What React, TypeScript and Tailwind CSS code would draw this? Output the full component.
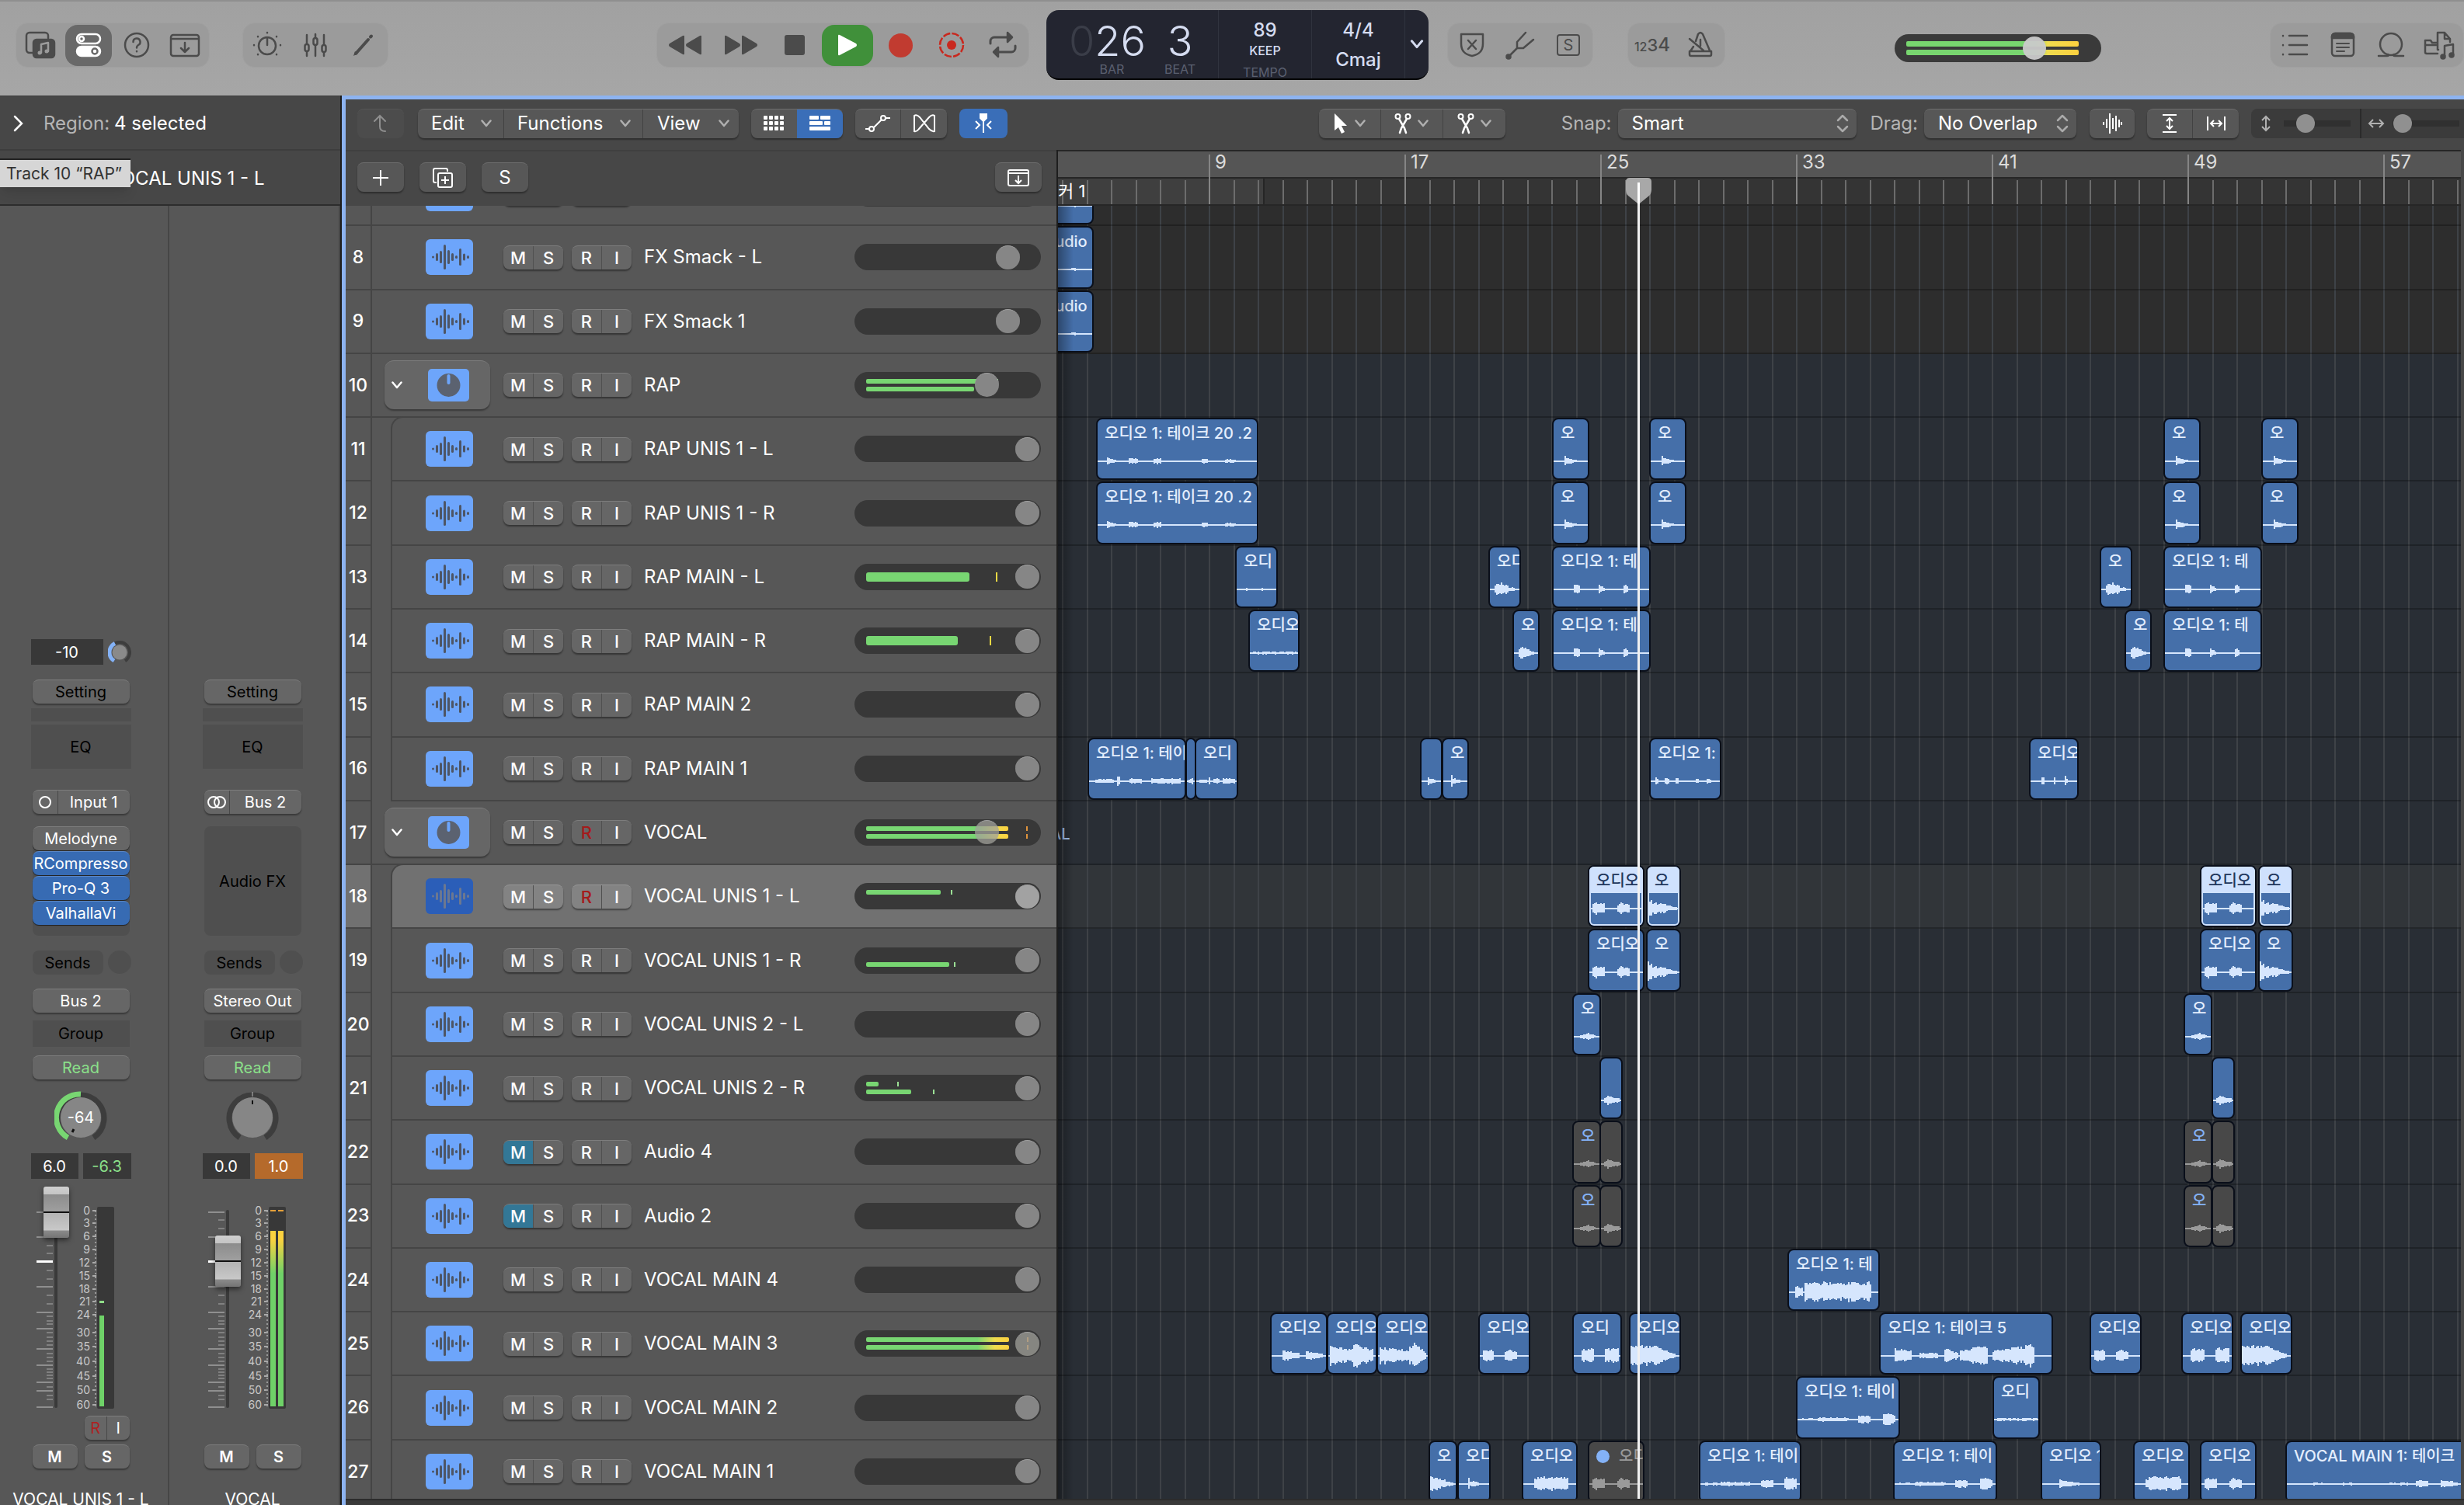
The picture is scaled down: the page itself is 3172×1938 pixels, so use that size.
import type { ReactNode } from 'react';
import clsx from 'clsx';

type Burst = [from: number, to: number, amp: number, endAmp?: number];

interface Region {
  x: number;
  w: number;
  label?: string;
  wave: keyof typeof WAVES;
  state?: 'muted' | 'selected' | 'take';
}

interface Meter {
  top?: number;
  bottom?: number;
  mono?: number;
  peakTop?: number;
  peakBottom?: number;
  hot?: boolean;
}

interface Track {
  n: number;
  name: string;
  kind?: 'group' | 'child' | 'first';
  muted?: boolean;
  armed?: boolean;
  selected?: boolean;
  volume?: number;
  meter?: Meter;
  regions?: Region[];
}

const WAVES = {
  flat: [[0.2, 0.25, 2], [0.6, 0.7, 2]],
  blips: [[0.05, 0.11, 6, 2], [0.19, 0.25, 4], [0.35, 0.4, 4], [0.65, 0.69, 3], [0.8, 0.86, 3]],
  hit: [[0.28, 0.35, 9, 7], [0.35, 0.65, 5, 2]],
  words: [[0.21, 0.27, 7], [0.47, 0.53, 7, 3], [0.72, 0.78, 9, 3]],
  low: [[0.05, 0.55, 2], [0.6, 0.95, 2]],
  speech: [[0.05, 0.25, 3], [0.28, 0.32, 6], [0.42, 0.55, 4], [0.64, 0.95, 4]],
  blob: [[0.15, 0.35, 6, 9], [0.35, 0.6, 9, 6], [0.6, 0.8, 3]],
  two: [[0.05, 0.27, 8], [0.5, 0.6, 5, 9], [0.6, 0.75, 9, 5]],
  twoLate: [[0.14, 0.42, 10], [0.64, 0.95, 11]],
  decay: [[0, 0.12, 14, 12], [0.12, 0.55, 9, 6], [0.55, 0.88, 5, 2]],
  small: [[0.2, 0.5, 2, 5], [0.5, 0.8, 6, 2]],
  knot: [[0.15, 0.35, 4, 7], [0.35, 0.85, 6, 3]],
  dense: [[0.06, 0.14, 8], [0.17, 0.92, 14]],
  soft: [[0.18, 0.24, 7], [0.26, 0.85, 10]],
  loud: [[0.03, 0.5, 13, 10], [0.5, 0.65, 14, 18], [0.65, 0.95, 14, 9]],
  late: [[0.03, 0.6, 12, 8], [0.6, 0.72, 12, 19], [0.72, 0.95, 19, 5]],
  full: [[0, 0.3, 13, 15], [0.3, 0.6, 15, 12], [0.6, 0.92, 11, 2]],
  phrase: [[0.08, 0.18, 10, 7], [0.22, 0.33, 4], [0.37, 0.45, 11, 4], [0.46, 0.62, 7, 15], [0.65, 0.9, 7, 16]],
  verse: [[0.04, 0.16, 2], [0.2, 0.5, 3], [0.6, 0.72, 6], [0.84, 0.96, 10, 7]],
  quiet: [[0.2, 0.5, 8, 4], [0.62, 0.94, 7, 3]],
  long: [[0.13, 0.2, 2], [0.3, 0.36, 2], [0.55, 0.65, 2], [0.7, 0.76, 5], [0.83, 0.92, 6, 3]],
} satisfies Record<string, Burst[]>;

const TRACKS: Track[] = [
  { n: 7, name: 'FX Smack - R', volume: 87, regions: [{ x: 1334, w: 74, label: 'Audio', wave: 'flat' }] },
  { n: 8, name: 'FX Smack - L', volume: 87, regions: [{ x: 1334, w: 74, label: 'Audio', wave: 'flat' }] },
  { n: 9, name: 'FX Smack 1', volume: 87, regions: [{ x: 1334, w: 74, label: 'Audio', wave: 'flat' }] },
  {
    n: 10, name: 'RAP', kind: 'group', volume: 74,
    meter: { top: 160, bottom: 154, peakTop: 183, peakBottom: 179 },
  },
  {
    n: 11, name: 'RAP UNIS 1 - L', kind: 'first',
    regions: [
      { x: 1412, w: 208, label: '오디오 1: 테이크 20 .2', wave: 'blips' },
      { x: 1999, w: 47, label: '오', wave: 'hit' },
      { x: 2124, w: 47, label: '오', wave: 'hit' },
      { x: 2786, w: 47, label: '오', wave: 'hit' },
      { x: 2912, w: 47, label: '오', wave: 'hit' },
    ],
  },
  {
    n: 12, name: 'RAP UNIS 1 - R', kind: 'child',
    regions: [
      { x: 1412, w: 208, label: '오디오 1: 테이크 20 .2', wave: 'blips' },
      { x: 1999, w: 47, label: '오', wave: 'hit' },
      { x: 2124, w: 47, label: '오', wave: 'hit' },
      { x: 2786, w: 47, label: '오', wave: 'hit' },
      { x: 2912, w: 47, label: '오', wave: 'hit' },
    ],
  },
  {
    n: 13, name: 'RAP MAIN - L', kind: 'child', meter: { mono: 148, peakTop: 182 },
    regions: [
      { x: 1591, w: 54, label: '오디', wave: 'flat' },
      { x: 1917, w: 41, label: '오디', wave: 'blob' },
      { x: 1999, w: 126, label: '오디오 1: 테', wave: 'words' },
      { x: 2704, w: 41, label: '오', wave: 'blob' },
      { x: 2786, w: 126, label: '오디오 1: 테', wave: 'words' },
    ],
  },
  {
    n: 14, name: 'RAP MAIN - R', kind: 'child', meter: { mono: 133, peakTop: 174 },
    regions: [
      { x: 1608, w: 65, label: '오디오', wave: 'low' },
      { x: 1948, w: 34, label: '오', wave: 'blob' },
      { x: 1999, w: 126, label: '오디오 1: 테', wave: 'words' },
      { x: 2736, w: 34, label: '오', wave: 'blob' },
      { x: 2786, w: 126, label: '오디오 1: 테', wave: 'words' },
    ],
  },
  { n: 15, name: 'RAP MAIN 2', kind: 'child' },
  {
    n: 16, name: 'RAP MAIN 1', kind: 'child',
    regions: [
      { x: 1401, w: 126, label: '오디오 1: 테이', wave: 'speech' },
      { x: 1527, w: 13, wave: 'small' },
      { x: 1539, w: 55, label: '오디', wave: 'speech' },
      { x: 1829, w: 28, wave: 'hit' },
      { x: 1857, w: 34, label: '오', wave: 'hit' },
      { x: 2124, w: 92, label: '오디오 1:', wave: 'blips' },
      { x: 2613, w: 63, label: '오디오', wave: 'words' },
    ],
  },
  {
    n: 17, name: 'VOCAL', kind: 'group', armed: true, volume: 74,
    meter: { top: 198, bottom: 198, peakTop: 221, peakBottom: 221, hot: true },
  },
  {
    n: 18, name: 'VOCAL UNIS 1 - L', kind: 'first', armed: true, selected: true, meter: { top: 111, peakTop: 124 },
    regions: [
      { x: 2045, w: 72, label: '오디오', wave: 'two', state: 'selected' },
      { x: 2120, w: 44, label: '오', wave: 'decay', state: 'selected' },
      { x: 2833, w: 72, label: '오디오', wave: 'two', state: 'selected' },
      { x: 2908, w: 44, label: '오', wave: 'decay', state: 'selected' },
    ],
  },
  {
    n: 19, name: 'VOCAL UNIS 1 - R', kind: 'child', meter: { bottom: 122, peakBottom: 128 },
    regions: [
      { x: 2045, w: 72, label: '오디오', wave: 'two' },
      { x: 2120, w: 44, label: '오', wave: 'decay' },
      { x: 2833, w: 72, label: '오디오', wave: 'two' },
      { x: 2908, w: 44, label: '오', wave: 'decay' },
    ],
  },
  {
    n: 20, name: 'VOCAL UNIS 2 - L', kind: 'child',
    regions: [
      { x: 2025, w: 36, label: '오', wave: 'small' },
      { x: 2812, w: 36, label: '오', wave: 'small' },
    ],
  },
  {
    n: 21, name: 'VOCAL UNIS 2 - R', kind: 'child',
    meter: { top: 31, bottom: 73, peakTop: 55, peakBottom: 101 },
    regions: [
      { x: 2060, w: 29, wave: 'knot' },
      { x: 2848, w: 29, wave: 'knot' },
    ],
  },
  {
    n: 22, name: 'Audio 4', kind: 'child', muted: true,
    regions: [
      { x: 2025, w: 36, label: '오', wave: 'small', state: 'muted' },
      { x: 2060, w: 29, wave: 'knot', state: 'muted' },
      { x: 2812, w: 36, label: '오', wave: 'small', state: 'muted' },
      { x: 2848, w: 29, wave: 'knot', state: 'muted' },
    ],
  },
  {
    n: 23, name: 'Audio 2', kind: 'child', muted: true,
    regions: [
      { x: 2025, w: 36, label: '오', wave: 'small', state: 'muted' },
      { x: 2060, w: 29, wave: 'knot', state: 'muted' },
      { x: 2812, w: 36, label: '오', wave: 'small', state: 'muted' },
      { x: 2848, w: 29, wave: 'knot', state: 'muted' },
    ],
  },
  { n: 24, name: 'VOCAL MAIN 4', kind: 'child', regions: [{ x: 2302, w: 118, label: '오디오 1: 테', wave: 'dense' }] },
  {
    n: 25, name: 'VOCAL MAIN 3', kind: 'child',
    meter: { top: 199, bottom: 199, peakTop: 222, peakBottom: 222, hot: true },
    regions: [
      { x: 1636, w: 73, label: '오디오', wave: 'quiet' },
      { x: 1709, w: 64, label: '오디오', wave: 'loud' },
      { x: 1773, w: 67, label: '오디오', wave: 'late' },
      { x: 1904, w: 66, label: '오디오', wave: 'two' },
      { x: 2025, w: 63, label: '오디', wave: 'twoLate' },
      { x: 2098, w: 66, label: '오디오', wave: 'full' },
      { x: 2420, w: 223, label: '오디오 1: 테이크 5', wave: 'phrase' },
      { x: 2691, w: 66, label: '오디오', wave: 'two' },
      { x: 2809, w: 66, label: '오디오', wave: 'twoLate' },
      { x: 2885, w: 66, label: '오디오', wave: 'full' },
    ],
  },
  {
    n: 26, name: 'VOCAL MAIN 2', kind: 'child',
    regions: [
      { x: 2313, w: 133, label: '오디오 1: 테이', wave: 'verse' },
      { x: 2566, w: 60, label: '오디', wave: 'low' },
    ],
  },
  {
    n: 27, name: 'VOCAL MAIN 1', kind: 'child',
    regions: [
      { x: 1840, w: 36, label: '오', wave: 'decay' },
      { x: 1877, w: 42, label: '오디', wave: 'hit' },
      { x: 1960, w: 71, label: '오디오', wave: 'soft' },
      { x: 2045, w: 72, label: '오디', wave: 'two', state: 'take' },
      { x: 2188, w: 131, label: '오디오 1: 테이', wave: 'verse' },
      { x: 2438, w: 133, label: '오디오 1: 테이', wave: 'verse' },
      { x: 2628, w: 77, label: '오디오 1', wave: 'hit' },
      { x: 2747, w: 72, label: '오디오', wave: 'soft' },
      { x: 2833, w: 72, label: '오디오', wave: 'two' },
      { x: 2943, w: 240, label: 'VOCAL MAIN 1: 테이크', wave: 'long' },
    ],
  },
];

// left edge of the arrange area in project coordinates
const ORIGIN = 1363;

// one 8-bar block is 252px, so two bars repeat every 63px
const BAR_GRID =
  'bg-[linear-gradient(90deg,#3e4247_2px,transparent_2px,transparent_32px,#3e4247_32px,#3e4247_34px,transparent_34px)] bg-size-[63px_100%] bg-position-[5px_0]';
const RULER_GRID =
  'bg-[linear-gradient(90deg,#6c6c6c_2px,transparent_2px,transparent_32px,#6c6c6c_32px,#6c6c6c_34px,transparent_34px)] bg-size-[63px_100%] bg-position-[5px_0]';

const BTN = 'border-t border-[#7d7d7d] bg-[#666666] shadow-[0_2px_2px_rgba(0,0,0,0.35)]';
const TOOL = 'border-t border-[#6c6c6c] bg-[#575757] shadow-[0_2px_2px_rgba(0,0,0,0.35)]';

function Icon({ children, className }: { children: ReactNode; className?: string }) {
  return (
    <svg
      width="40"
      height="40"
      viewBox="0 0 40 40"
      fill="none"
      stroke="currentColor"
      strokeWidth="2.5"
      strokeLinecap="round"
      strokeLinejoin="round"
      className={clsx('shrink-0', className)}
    >
      {children}
    </svg>
  );
}

function Chevron({ className }: { className?: string }) {
  return (
    <svg width="14" height="10" viewBox="0 0 14 10" fill="none" stroke="currentColor" strokeWidth="2.5" strokeLinecap="round" strokeLinejoin="round" className={className}>
      <path d="M1.500 1.500L7 8L12.500 1.500" />
    </svg>
  );
}

function BarButton({ label, active, className, children }: { label: string; active?: boolean; className?: string; children: ReactNode }) {
  return (
    <button aria-label={label} className={clsx('flex h-14 items-center justify-center text-[#4b4b4b]', className ?? 'w-[62px]')}>
      {active ? (
        <span className="flex h-[53px] w-[60px] items-center justify-center rounded-2xl bg-[#696969] text-white">{children}</span>
      ) : (
        children
      )}
    </button>
  );
}

function BarGroup({ className, children }: { className?: string; children: ReactNode }) {
  return <div className={clsx('flex shrink-0 items-center rounded-2xl border border-[#a0a0a0] bg-[#9b9b9b]', className)}>{children}</div>;
}

function ControlBar() {
  return (
    <header className="flex h-[123px] shrink-0 items-start border-t-2 border-[#8f8f8f] bg-linear-to-b from-[#a1a1a1] to-[#a6a6a6] pl-5">
      <BarGroup className="mt-[27px]">
        <BarButton label="Library">
          <Icon>
            <path d="M11 30H6a4 4 0 0 1-4-4V8a4 4 0 0 1 4-4h20a4 4 0 0 1 4 4v3" />
            <rect x="11" y="13" width="27" height="23" rx="4" fill="currentColor" />
            <path d="M21 30V19l9-2v11" stroke="#9b9b9b" />
            <circle cx="19" cy="30" r="2.500" fill="#9b9b9b" stroke="none" />
            <circle cx="28" cy="28" r="2.500" fill="#9b9b9b" stroke="none" />
          </Icon>
        </BarButton>
        <BarButton label="Inspector" active>
          <Icon>
            <rect x="5" y="6" width="30" height="12" rx="6" />
            <circle cx="11" cy="12" r="3" />
            <rect x="5" y="22" width="30" height="12" rx="6" fill="currentColor" />
            <circle cx="28" cy="28" r="3.500" stroke="#696969" />
          </Icon>
        </BarButton>
        <BarButton label="Quick Help">
          <Icon>
            <circle cx="20" cy="20" r="15" />
            <path d="M15.500 16a4.500 4.500 0 1 1 6.500 4c-1.500 1-2 1.500-2 3.500M20 28v.2" />
          </Icon>
        </BarButton>
        <BarButton label="Toolbar">
          <Icon>
            <rect x="2" y="7" width="36" height="27" rx="3" />
            <path d="M3 12h34M20 17v11M15 24l5 5l5-5" />
          </Icon>
        </BarButton>
      </BarGroup>
      <BarGroup className="mt-[27px] ml-[42px]">
        <BarButton label="Smart Controls">
          <Icon>
            <circle cx="20" cy="21" r="11" />
            <path d="M20 11v9M20 4v.2M8 9v.2M32 9v.2M3 20v.2M37 20v.2M8 32v.2M32 32v.2" />
          </Icon>
        </BarButton>
        <BarButton label="Mixer">
          <Icon>
            <path d="M9 7v11M9 28v6M20 6v5M20 20v14M31 7v12M31 29v5" />
            <rect x="6.500" y="19" width="5" height="9" rx="2.500" />
            <rect x="17.500" y="11" width="5" height="9" rx="2.500" />
            <rect x="28.500" y="20" width="5" height="9" rx="2.500" />
          </Icon>
        </BarButton>
        <BarButton label="Editors">
          <Icon>
            <path d="M10 31L26 13M29 9.500l1-1" strokeWidth="4" />
            <path d="M7 34l2-6l4 3z" fill="currentColor" stroke="none" />
          </Icon>
        </BarButton>
      </BarGroup>

      <div className="flex flex-1 items-start justify-end pr-[217px]">
        <BarGroup className="mt-[27px]">
          <BarButton label="Rewind" className="w-[72px]">
            <svg width="44" height="26" viewBox="0 0 44 26" fill="currentColor"><path d="M21 2v22q0 2-2 1L2 15q-2-2 0-4L19 1q2-1 2 1zM43 2v22q0 2-2 1L24 15q-2-2 0-4L41 1q2-1 2 1z" /></svg>
          </BarButton>
          <BarButton label="Forward" className="w-[72px]">
            <svg width="44" height="26" viewBox="0 0 44 26" fill="currentColor"><path d="M1 2v22q0 2 2 1l17-10q2-2 0-4L3 1Q1 0 1 2zM23 2v22q0 2 2 1l17-10q2-2 0-4L25 1q-2-1-2 1z" /></svg>
          </BarButton>
          <BarButton label="Stop" className="w-[66px]">
            <span className="size-[26px] rounded-[3px] bg-[#4b4b4b]" />
          </BarButton>
          <BarButton label="Play" className="w-[70px]">
            <span className="flex h-[53px] w-[66px] items-center justify-center rounded-2xl bg-[#40903a]">
              <svg width="26" height="28" viewBox="0 0 26 28" fill="white"><path d="M1 2v24q0 2 2 1l21-11q2-2 0-4L3 1Q1 0 1 2z" /></svg>
            </span>
          </BarButton>
          <BarButton label="Record" className="w-[66px]">
            <span className="size-[31px] rounded-full bg-[#c13b30]" />
          </BarButton>
          <BarButton label="Capture Recording" className="w-[66px]">
            <svg width="34" height="34" viewBox="0 0 34 34" fill="none">
              <circle cx="17" cy="17" r="15" stroke="#c9281e" strokeWidth="2.500" strokeDasharray="9.500 2.280" />
              <circle cx="17" cy="17" r="6" fill="#c9281e" />
            </svg>
          </BarButton>
          <BarButton label="Cycle" className="w-[66px]">
            <Icon>
              <path d="M4 18v-3a5 5 0 0 1 5-5h18M36 21v3a5 5 0 0 1-5 5H13" strokeWidth="3" />
              <path d="M26 4l6 6l-6 6zM14 23l-6 6l6 6z" fill="currentColor" />
            </Icon>
          </BarButton>
        </BarGroup>

        <div className="mt-[11px] ml-[22px] flex h-[90px] shrink-0 rounded-2xl border-b-2 border-black bg-[#232530] text-[#d5dcf0]">
          <div className="flex w-[222px] justify-center gap-6 border-r border-[#30333e] pt-3">
            <div className="flex flex-col items-center">
              <div className="text-[54px] leading-14 font-light"><span className="text-[#3a3d48]">0</span>26</div>
              <div className="pl-3 text-base leading-4 text-[#5b6070]">BAR</div>
            </div>
            <div className="flex flex-col items-center">
              <div className="text-[54px] leading-14 font-light">3</div>
              <div className="text-base leading-4 text-[#5b6070]">BEAT</div>
            </div>
          </div>
          <div className="flex w-[120px] flex-col items-center border-r border-[#30333e] pt-3">
            <div className="text-2xl leading-7 font-medium">89</div>
            <div className="text-base leading-6 font-medium">KEEP</div>
            <div className="mt-1 text-base leading-6 text-[#5b6070]">TEMPO</div>
          </div>
          <div className="flex w-[120px] flex-col items-center border-r border-[#30333e] pt-3">
            <div className="text-2xl leading-7 font-medium">4/4</div>
            <div className="mt-2.5 text-2xl leading-7 font-medium">Cmaj</div>
          </div>
          <button aria-label="LCD display mode" className="flex w-[30px] items-center justify-center">
            <Chevron className="h-3 w-5" />
          </button>
        </div>

        <BarGroup className="mt-[27px] ml-6">
          <BarButton label="Replace">
            <Icon>
              <path d="M6 6h28v12c0 10-5 14-14 16C11 32 6 28 6 18z" />
              <path d="M15 14l10 11M25 14L15 25" />
            </Icon>
          </BarButton>
          <BarButton label="Tuner">
            <Icon>
              <path d="M27 4L16 16v8h8L37 13M16 24L5 35" />
              <circle cx="5" cy="35" r="2.500" fill="currentColor" />
            </Icon>
          </BarButton>
          <BarButton label="Solo">
            <span className="flex h-7 w-[30px] items-center justify-center rounded border-[2.5px] border-[#4b4b4b] text-xl">S</span>
          </BarButton>
        </BarGroup>
        <BarGroup className="mt-[27px] ml-11">
          <BarButton label="Count In">
            <span className="flex items-baseline font-medium"><span className="text-base">12</span><span className="text-[22px]">3</span><span className="text-2xl">4</span></span>
          </BarButton>
          <BarButton label="Metronome">
            <Icon>
              <path d="M14 15L17 6q3-4 6 0l9 21M11 22l-4 6M6 28h28v4a2 2 0 0 1-2 2H8a2 2 0 0 1-2-2zM6 12l18 15M20 13v8" />
            </Icon>
          </BarButton>
        </BarGroup>
        <div className="relative mt-[42px] ml-[218px] h-9 w-[266px] shrink-0 rounded-full bg-[#3a3a3a]">
          <svg width="266" height="36" className="absolute inset-0">
            <defs>
              <linearGradient id="master" x1="0" x2="1">
                <stop offset="0.75" stopColor="#78d66f" />
                <stop offset="0.82" stopColor="#f0dc4e" />
                <stop offset="1" stopColor="#fcd03f" />
              </linearGradient>
            </defs>
            <rect x="15" y="9" width="222" height="7" rx="2" fill="url(#master)" />
            <rect x="15" y="20" width="222" height="7" rx="2" fill="url(#master)" />
          </svg>
          <input
            type="range"
            aria-label="Master Volume"
            defaultValue={70}
            className="absolute inset-0 size-full appearance-none bg-transparent [&::-webkit-slider-thumb]:size-[30px] [&::-webkit-slider-thumb]:appearance-none [&::-webkit-slider-thumb]:rounded-full [&::-webkit-slider-thumb]:bg-[#cacaca]/95"
          />
        </div>
      </div>

      <BarGroup className="mt-[27px]">
        <BarButton label="List Editors">
          <Icon>
            <path d="M13 8h23M13 20h23M13 32h23M5 8v.2M5 20v.2M5 32v.2" />
          </Icon>
        </BarButton>
        <BarButton label="Note Pads">
          <Icon>
            <rect x="6" y="5" width="28" height="29" rx="4" />
            <path d="M6 11V9a4 4 0 0 1 4-4h20a4 4 0 0 1 4 4v2z" fill="currentColor" />
            <path d="M12 18h16M12 23h16M12 28h10" strokeWidth="2" />
          </Icon>
        </BarButton>
        <BarButton label="Apple Loops">
          <Icon>
            <circle cx="20" cy="19" r="14" />
            <path d="M4 34h11q3 0 1-2M36 34H25q-3 0-1-2" />
          </Icon>
        </BarButton>
        <BarButton label="Browsers">
          <Icon>
            <path d="M18 31H4a2 2 0 0 1-2-2V14h7l2 3h6M2 20h14M19 26h-1V4h9l7 8v4M27 4v8h7" />
            <path d="M27 34V21l11-2v13" />
            <circle cx="25" cy="35" r="2.500" fill="currentColor" />
            <circle cx="36" cy="33" r="2.500" fill="currentColor" />
          </Icon>
        </BarButton>
      </BarGroup>
    </header>
  );
}

/* ---------- inspector ---------- */

const SCALE: [string, number][] = [
  ['0', 31], ['3', 47], ['6', 64], ['9', 81], ['12', 98], ['15', 115], ['18', 132], ['21', 148],
  ['24', 165], ['30', 188], ['35', 206], ['40', 225], ['45', 244], ['50', 262], ['60', 281],
];
const MAJOR = [32, 64, 128, 161, 182, 208, 229, 251, 262, 283];
const MINOR = [42, 53, 75, 85, 107, 118, 139, 150, 166, 172, 176, 187, 193, 198, 203, 214, 219, 224, 234, 238, 242, 246, 257, 268, 273];

function FaderScale({ stereo }: { stereo?: boolean }) {
  return (
    <svg width="129" height="290" className="absolute inset-0" fontSize="14" fill="#c9c9c9">
      <defs>
        <linearGradient id="hot" x1="0" x2="0" y1="57" y2="112" gradientUnits="userSpaceOnUse">
          <stop offset="0.2" stopColor="#fbd13f" />
          <stop offset="1" stopColor="#6fd268" />
        </linearGradient>
      </defs>
      <rect x="30" y="30" width="4" height="255" rx="2" fill="#3a3a3a" />
      {MAJOR.map(y => <rect key={y} x="7" y={y} width="21" height="2" fill="#8f8f8f" />)}
      {MINOR.map(y => <rect key={y} x="20" y={y} width="8" height="2" fill="#808080" />)}
      <rect x="7" y="95" width="21" height="3" fill="#fff" />
      {SCALE.map(([t, y]) => (
        <g key={t}>
          <text x="76" y={y + 5} textAnchor="end">{t}</text>
          <rect x="79" y={y - 1} width="5" height="2" fill="#aaa" />
        </g>
      ))}
      <path d="M83 31V283" stroke="#999" strokeWidth="2" strokeDasharray="2 3" />
      <rect x="85" y="26" width="22" height="260" rx="2" fill="#383838" />
      {stereo ? (
        <>
          <rect x="87" y="57" width="7" height="226" fill="url(#hot)" />
          <rect x="97" y="57" width="7" height="226" fill="url(#hot)" />
          <rect x="87" y="30" width="7" height="2" fill="#e5a03a" />
          <rect x="97" y="30" width="7" height="2" fill="#e5a03a" />
        </>
      ) : (
        <>
          <rect x="88" y="166" width="6" height="117" fill="#6fd268" />
          <rect x="88" y="147" width="6" height="3" fill="#8fdc88" />
        </>
      )}
    </svg>
  );
}

function PanKnob({ value }: { value?: string }) {
  return (
    <svg width="68" height="68" viewBox="0 0 68 68" role="img" aria-label="Pan">
      <path d="M17.500 60A30 30 0 1 1 50.500 60" fill="none" stroke="#3d3d3d" strokeWidth="7" />
      {value && <path d="M17.500 60A30 30 0 0 1 34 4" fill="none" stroke="#78d672" strokeWidth="7" />}
      <circle cx="34" cy="34" r="26" fill="#868686" />
      {value ? <path d="M25 49l-2 4" stroke="#111" strokeWidth="3" /> : <path d="M34 12v5" stroke="#111" strokeWidth="2" />}
      {!value && <path d="M34 1v6" stroke="#bbb" strokeWidth="1" />}
      <text x="34" y="41" textAnchor="middle" fontSize="20" fill="#fff">{value}</text>
    </svg>
  );
}

interface StripProps {
  name: string;
  gain?: string;
  input: string;
  stereo?: boolean;
  fx: string[];
  output: string;
  pan?: string;
  level: string;
  peak: string;
  fader: number;
}

function ChannelStrip({ name, gain, input, stereo, fx, output, pan, level, peak, fader }: StripProps) {
  const button = clsx(BTN, 'mx-0.5 h-[31px] rounded-lg');
  return (
    <section className={clsx('flex flex-col items-center border-r-2 border-[#464646] pt-[558px]', stereo ? 'flex-1 pr-1' : 'w-[218px] pr-2')}>
      <div className="flex w-[129px] flex-col text-xl leading-7 text-black">
        <div className="flex h-[33px] items-center justify-between">
          {gain && (
            <>
              <span className="flex h-full w-[93px] items-center justify-center bg-[#383838] text-white">{gain}</span>
              <svg width="30" height="30" viewBox="0 0 30 30">
                <path d="M8 26A13 13 0 1 1 22 26" fill="none" stroke="#3d3d3d" strokeWidth="4" />
                <path d="M8 26A13 13 0 0 1 9 3.500" fill="none" stroke="#84b2f6" strokeWidth="5" />
                <circle cx="15" cy="15" r="9.500" fill="#8a8a8a" />
              </svg>
            </>
          )}
        </div>
        <button className={clsx(button, 'mt-[19px]')}>Setting</button>
        <div className="mt-1.5 h-[17px] bg-[#4f4f4f]" />
        <div className="mt-1 flex h-[57px] items-center justify-center bg-[#4f4f4f]">EQ</div>
        <div className={clsx(button, 'mt-[27px] flex text-white')}>
          <button aria-label="Format" className="flex w-[33px] items-center justify-center border-r border-[#484848]">
            <svg width="26" height="18" viewBox="0 0 26 18" fill="none" stroke="#fff" strokeWidth="2">
              {stereo ? <><circle cx="9" cy="9" r="7" /><circle cx="17" cy="9" r="7" /></> : <circle cx="13" cy="9" r="7" />}
            </svg>
          </button>
          <button className="flex-1">{input}</button>
        </div>
        <div className="mx-0.5 mt-4 flex h-[141px] flex-col gap-px rounded-lg bg-[#4f4f4f]">
          {fx.length === 0 && <span className="m-auto">Audio FX</span>}
          {fx.map((f, i) => (
            <button
              key={f}
              className={clsx(
                'h-[31px] overflow-hidden rounded-lg border-t text-white shadow-[0_1px_1px_rgba(0,0,0,0.6)]',
                i === 0 ? 'border-[#7d7d7d] bg-[#666666]' : 'border-[#5a87c6] bg-[#376bb3]',
              )}
            >
              {f}
            </button>
          ))}
        </div>
        <div className="mt-[19px] flex h-[31px] justify-between pl-0.5">
          <button className="w-[91px] rounded-lg bg-[#4f4f4f]">Sends</button>
          <span className="size-[30px] rounded-full bg-[#4f4f4f]" />
        </div>
        <button className={clsx(button, 'mt-[18px] whitespace-nowrap text-white')}>{output}</button>
        <button className="mx-0.5 mt-2.5 h-[34px] bg-[#4f4f4f]">Group</button>
        <button className={clsx(button, 'mt-[11px] text-[#8be08a]')}>Read</button>
        <div className="mt-[15px] flex justify-center"><PanKnob value={pan} /></div>
        <div className="mt-3 flex h-[33px] justify-between text-white">
          <span className="flex w-[61px] items-center justify-center bg-[#383838]">{level}</span>
          <span className={clsx('flex w-[62px] items-center justify-center', stereo ? 'bg-[#b56a2b]' : 'bg-[#383838] text-[#8be08a]')}>{peak}</span>
        </div>
        <div className="relative mt-2.5 h-[290px]">
          <FaderScale stereo={stereo} />
          <input
            type="range"
            aria-label={`${name} volume`}
            defaultValue={fader}
            className="absolute top-0 left-4 h-full w-[33px] appearance-none bg-transparent [direction:rtl] [writing-mode:vertical-lr] [&::-webkit-slider-thumb]:h-[66px] [&::-webkit-slider-thumb]:w-[33px] [&::-webkit-slider-thumb]:appearance-none [&::-webkit-slider-thumb]:rounded-[3px] [&::-webkit-slider-thumb]:bg-[linear-gradient(#d0d0d0_0,#c4c4c4_10px,#8c8c8c_10px,#9f9f9f_32px,#111_32px,#111_34px,#b4b4b4_34px,#c8c8c8_56px,#8a8a8a_57px,#747474_66px)] [&::-webkit-slider-thumb]:shadow-[0_3px_6px_rgba(0,0,0,0.5)]"
          />
        </div>
        <div className="mt-[5px] flex h-[31px] justify-end">
          {!stereo && (
            <div className={clsx(button, 'flex w-[58px] text-white')}>
              <button className="flex-1 border-r border-[#484848] text-[#ad2222]">R</button>
              <button className="flex-1">I</button>
            </div>
          )}
        </div>
        <div className="mt-1.5 flex justify-between text-white">
          <button className={clsx(button, 'w-[58px] font-semibold')}>M</button>
          <button className={clsx(button, 'w-[58px] font-semibold')}>S</button>
        </div>
      </div>
      <div className="mt-[26px] text-[21px] leading-7 whitespace-nowrap text-white">{name}</div>
    </section>
  );
}

function Inspector() {
  return (
    <aside className="relative flex w-[440px] shrink-0 flex-col border-r-2 border-[#1c1c1c] bg-[#575757]">
      <div className="flex h-[71px] shrink-0 items-center border-t border-b-2 border-[#3d3d3d] bg-[#474747] pt-0.5 pl-4 text-2xl text-white">
        <button aria-label="Show region parameters">
          <svg width="16" height="24" viewBox="0 0 16 24" fill="none" stroke="#fff" strokeWidth="2.500" strokeLinecap="round"><path d="M3 3l9 9l-9 9" /></svg>
        </button>
        <span className="ml-6 text-[#b5b5b5]">Region:</span>
        <span className="ml-1.5">4 selected</span>
      </div>
      <div className="flex h-[71px] shrink-0 items-center border-b-2 border-[#2d2d2d] bg-[#474747] pt-0.5 pl-[140px] text-2xl text-white">VOCAL UNIS 1 - L</div>
      <div className="flex flex-1">
        <ChannelStrip
          name="VOCAL UNIS 1 - L"
          gain="-10"
          input="Input 1"
          fx={['Melodyne', 'RCompresso', 'Pro-Q 3', 'ValhallaVi']}
          output="Bus 2"
          pan="-64"
          level="6.0"
          peak="-6.3"
          fader={100}
        />
        <ChannelStrip name="VOCAL" stereo input="Bus 2" fx={[]} output="Stereo Out" level="0.0" peak="1.0" fader={72} />
      </div>
      <div role="tooltip" className="absolute top-[81px] left-0 flex h-[37px] w-[168px] items-center border-t-2 border-[#222] bg-[#d6d6d6] pl-2 text-[21px] whitespace-nowrap text-[#333] shadow-lg">
        Track 10 “RAP”
      </div>
    </aside>
  );
}

/* ---------- track headers ---------- */

function SplitButton({ labels, muted, armed, bright }: { labels: [string, string]; muted?: boolean; armed?: boolean; bright?: boolean }) {
  return (
    <div className={clsx('flex h-[31px] w-[77px] shrink-0 overflow-hidden rounded-lg border-t text-[22px] leading-7 font-medium text-white shadow-[0_2px_2px_rgba(0,0,0,0.4)]', bright ? 'border-[#969696] bg-[#838383]' : 'border-[#7d7d7d] bg-[#666666]')}>
      <button className={clsx('flex-1 border-r border-[#505050]', muted && 'bg-[#337796]', armed && 'text-[#a51b1b]')}>{labels[0]}</button>
      <button className="flex-1">{labels[1]}</button>
    </div>
  );
}

const TILE_BARS: [number, number][] = [[9, 3], [14, 10], [19, 16], [24, 32], [29, 18], [34, 10], [39, 4], [44, 22], [49, 9], [54, 4]];

function WaveTile({ selected }: { selected?: boolean }) {
  return (
    <svg width="61" height="46" className="shrink-0">
      <rect width="61" height="46" rx="6" fill={selected ? '#2b5eb8' : '#6da5fb'} />
      {TILE_BARS.map(([x, h]) => (
        <rect key={x} x={x - 1} y={23 - h / 2} width="3" height={h} rx="1.500" fill={selected ? '#6c7890' : '#4d5565'} />
      ))}
    </svg>
  );
}

function LevelMeter({ meter, id }: { meter: Meter; id: number }) {
  const { top, bottom, mono, peakTop, peakBottom, hot } = meter;
  const fill = hot ? `url(#m${id})` : '#78d672';
  const peak = hot ? '#e0933c' : mono ? '#e8d844' : '#9be095';
  return (
    <svg width="240" height="34" className="absolute inset-0">
      <defs>
        <linearGradient id={`m${id}`} x1="15" x2="199" y1="0" y2="0" gradientUnits="userSpaceOnUse">
          <stop offset="0.78" stopColor="#78d672" />
          <stop offset="0.9" stopColor="#f0dc4e" />
          <stop offset="1" stopColor="#fcd03f" />
        </linearGradient>
      </defs>
      {top && <rect x="15" y="9" width={top - 15} height="6" rx="2" fill={fill} />}
      {bottom && <rect x="15" y="19" width={bottom - 15} height="6" rx="2" fill={fill} />}
      {mono && <rect x="15" y="11" width={mono - 15} height="12" rx="3" fill={fill} />}
      {peakTop && <rect x={peakTop} y={mono ? 11 : 9} width="2" height={mono ? 12 : 6} fill={peak} />}
      {peakBottom && <rect x={peakBottom} y="19" width="2" height="6" fill={peak} />}
    </svg>
  );
}

function TrackHeader({ track }: { track: Track }) {
  const { n, name, kind, muted, armed, selected, volume = 99, meter } = track;
  const nested = kind === 'first' || kind === 'child';
  return (
    <div className="flex min-h-0">
      <div className={clsx('flex w-[34px] shrink-0 items-center justify-center border-r-2 border-b-2 border-[#454545] text-[23px] font-medium text-white', selected && 'bg-[#717171]')}>
        {n}
      </div>
      <div
        className={clsx(
          'flex flex-1 items-center border-b-2 border-[#454545] pr-5',
          nested && 'ml-6 border-l-2',
          kind === 'first' && '-mt-0.5 rounded-tl-2xl border-t-2',
          selected && 'bg-[#717171]',
        )}
      >
        <div className={clsx('shrink-0', nested ? 'w-[143px] pl-[43px]' : 'w-[169px]', !nested && kind !== 'group' && 'pl-[69px]')}>
          {kind === 'group' ? (
            <button aria-label={`Collapse ${name}`} className="ml-4 flex h-[63px] w-[136px] items-center rounded-xl border-t border-[#7d7d7d] bg-[#666666] pl-2 text-white shadow-[0_2px_2px_rgba(0,0,0,0.35)]">
              <Chevron className="w-4" />
              <svg width="53" height="42" className="ml-8">
                <rect width="53" height="42" rx="5" fill="#6da5fb" />
                <circle cx="26.500" cy="21" r="15" fill="#5b6270" />
                <path d="M26.500 9v9" stroke="#6da5fb" strokeWidth="4" strokeLinecap="round" />
              </svg>
            </button>
          ) : (
            <WaveTile selected={selected} />
          )}
        </div>
        <SplitButton labels={['M', 'S']} muted={muted} bright={selected} />
        <div className="w-[11px] shrink-0" />
        <SplitButton labels={['R', 'I']} armed={armed} bright={selected} />
        <div className="ml-4 flex-1 text-2xl whitespace-nowrap text-white">{name}</div>
        <div className="relative h-[34px] w-60 shrink-0 rounded-full bg-[#383838]">
          {meter && <LevelMeter meter={meter} id={n} />}
          <input
            type="range"
            aria-label={`${name} volume`}
            defaultValue={volume}
            className={clsx(
              'absolute inset-0 size-full appearance-none bg-transparent [&::-webkit-slider-thumb]:size-[31px] [&::-webkit-slider-thumb]:appearance-none [&::-webkit-slider-thumb]:rounded-full [&::-webkit-slider-thumb]:border-t [&::-webkit-slider-thumb]:border-[#a0a0a0]',
              selected ? '[&::-webkit-slider-thumb]:bg-[#a2a2a2]' : meter?.hot ? '[&::-webkit-slider-thumb]:bg-[#a0a09a]/75' : '[&::-webkit-slider-thumb]:bg-[#868686]',
            )}
          />
        </div>
      </div>
    </div>
  );
}

/* ---------- arrange area ---------- */

// cheap repeatable noise, 0.65..1
function noise(i: number) {
  const v = Math.sin(i * 12.9898 + 4.1) * 43758.5453;
  return 0.65 + 0.35 * (v - Math.floor(v));
}

function wavePath(bursts: Burst[], w: number, mid: number) {
  let d = `M0 ${mid - 1}h${w}v2h-${w}z`;
  for (let x = 0; x < w - 2; x += 2) {
    const t = x / w;
    const b = bursts.find(([from, to]) => t >= from && t < to);
    if (!b) continue;
    const [from, to, amp, end = amp] = b;
    const a = (amp + ((end - amp) * (t - from)) / (to - from)) * noise(x + w);
    const up = Math.max(1, Math.round(a));
    const down = Math.max(1, Math.round(a * noise(x * 3 + 1)));
    d += `M${x} ${mid - up}h2v${up + down}h-2z`;
  }
  return d;
}

function RegionBlock({ region }: { region: Region }) {
  const { x, w, label, wave, state } = region;
  const grey = state === 'muted' || state === 'take';
  return (
    <div
      className={clsx(
        'absolute inset-y-0 overflow-hidden rounded-lg border-2 border-[#0a0f1a]',
        grey ? 'bg-[#484848]' : 'bg-[#456fa9]',
      )}
      style={{ left: x - ORIGIN, width: w + 1 }}
    >
      <svg width={w - 3} height="76" className="absolute inset-0" fill={grey ? '#9a9a9a' : '#d6e6fd'}>
        <path d={wavePath(WAVES[wave] as Burst[], w - 3, 54)} />
      </svg>
      <div
        className={clsx(
          'relative h-[34px] pl-[9px] text-xl leading-9 font-medium whitespace-nowrap',
          state === 'selected' ? 'bg-[#cfe1fd] text-[#22375c]' : state === 'muted' ? 'text-[#84b2f6]' : state === 'take' ? 'text-[#9a9a9a]' : 'text-[#e4eefe]',
        )}
      >
        {state === 'take' && <span className="mr-3 inline-block size-[17px] translate-y-0.5 rounded-full bg-[#84b2f6]" />}
        {label}
      </div>
      {state === 'selected' && <div className="absolute inset-0 rounded-md border-2 border-[#cfe1fd]" />}
    </div>
  );
}

function Lane({ track }: { track: Track }) {
  return (
    <div
      className={clsx(
        'relative min-h-0 border-b-2 border-black/25',
        BAR_GRID,
        track.n < 10 ? 'bg-[#2d2d2d]' : track.selected ? 'bg-[#313539]' : 'bg-[#292e35]',
      )}
    >
      {track.n === 17 && <span className="absolute top-6 left-0 text-xl leading-9 font-medium text-[#a9c8f8]"><span className="-ml-[53px]">VOCAL</span></span>}
      {track.regions?.map(r => <RegionBlock key={r.x} region={r} />)}
    </div>
  );
}

function Ruler() {
  return (
    <div className="relative h-[72px] shrink-0 overflow-hidden border-y-2 border-[#262626] bg-[#343434]">
      <div className="h-[35px] border-b-2 border-[#262626] bg-[#555555]" />
      <div className="relative h-[33px]">
        <div className="absolute inset-y-0 left-0 w-[266px] border-r-2 border-[#262626] bg-[#3f3f3f]" />
        <div className={clsx('absolute inset-x-0 top-0.5 bottom-0', RULER_GRID)} />
        <span className="absolute top-1 left-0 text-[22px] leading-6 whitespace-nowrap text-white">커 1</span>
      </div>
      <div className="absolute inset-y-0 left-[194px] flex">
        {[9, 17, 25, 33, 41, 49, 57].map(bar => (
          <div key={bar} className="mt-1 w-[252px] shrink-0 border-l-2 border-[#858585] pl-1.5 text-2xl leading-5 text-[#dcdcdc]">{bar}</div>
        ))}
      </div>
    </div>
  );
}

function ToolMenu({ label, children }: { label: string; children: ReactNode }) {
  return (
    <button aria-label={label} className="flex w-20 items-center justify-center gap-2 border-r border-[#424242] text-white last:border-0">
      {children}
      <Chevron className="text-[#b0b0b0]" />
    </button>
  );
}

function Scissors() {
  return (
    <svg width="22" height="28" viewBox="0 0 22 28" fill="none" stroke="#fff" strokeWidth="2">
      <circle cx="4.500" cy="5" r="3" />
      <circle cx="17.500" cy="5" r="3" />
      <path d="M6 8l7 12l2 6M16 8L9 20l-2 6" strokeWidth="2.500" strokeLinecap="round" />
    </svg>
  );
}

function UpDown() {
  return (
    <svg width="16" height="24" viewBox="0 0 16 24" fill="none" stroke="#aaa" strokeWidth="2.500" strokeLinecap="round" strokeLinejoin="round" className="pointer-events-none absolute top-[7px] right-2.5">
      <path d="M2 8l6-6l6 6M2 16l6 6l6-6" />
    </svg>
  );
}

function Picker({ id, label, value, className }: { id: string; label: string; value: string; className: string }) {
  return (
    <>
      <label htmlFor={id} className="mr-2 text-2xl text-[#b5b5b5]">{label}</label>
      <div className={clsx('relative shrink-0', className)}>
        <select id={id} className={clsx(TOOL, 'h-[38px] w-full appearance-none rounded-lg pl-[18px] text-2xl leading-8 text-white')}>
          <option>{value}</option>
        </select>
        <UpDown />
      </div>
    </>
  );
}

function TracksToolbar() {
  const zoom =
    'h-6 appearance-none bg-[linear-gradient(transparent_8px,#303030_8px,#303030_16px,transparent_16px)] [&::-webkit-slider-thumb]:size-6 [&::-webkit-slider-thumb]:appearance-none [&::-webkit-slider-thumb]:rounded-full [&::-webkit-slider-thumb]:bg-[#909090]';
  return (
    <div className="flex h-[65px] shrink-0 items-center bg-[#474747] pb-1 pl-[15px] text-2xl text-white">
      <button aria-label="Up one level" className="flex h-[38px] w-[60px] items-center justify-center rounded-lg border-t border-[#555] bg-[#4c4c4c] text-[#8f8f8f]">
        <svg width="20" height="24" viewBox="0 0 20 24" fill="none" stroke="currentColor" strokeWidth="2" strokeLinecap="round"><path d="M2 9l7-7l7 7M9 2v14q0 6 7 6" /></svg>
      </button>
      <div className={clsx(TOOL, 'ml-[18px] flex h-[38px] rounded-lg')}>
        <button className="flex w-[111px] items-center justify-between border-r border-[#424242] pr-[15px] pl-[17px]">Edit<Chevron className="text-[#b0b0b0]" /></button>
        <button className="flex w-[179px] items-center justify-between border-r border-[#424242] pr-[15px] pl-[17px]">Functions<Chevron className="text-[#b0b0b0]" /></button>
        <button className="flex w-[123px] items-center justify-between pr-3 pl-[18px]">View<Chevron className="text-[#b0b0b0]" /></button>
      </div>
      <div className={clsx(TOOL, 'ml-4 flex h-[38px] overflow-hidden rounded-lg')}>
        <button aria-label="Live Loops" className="flex w-[59px] items-center justify-center">
          <svg width="28" height="20" fill="#fff">
            {[0, 7, 14].map(y => [0, 7, 14, 21].map(x => <rect key={`${x}-${y}`} x={x} y={y} width="5" height="5" rx="1" />))}
          </svg>
        </button>
        <button aria-label="Tracks view" className="flex w-[59px] items-center justify-center bg-[#3a6eb8]">
          <svg width="28" height="20" fill="#fff">
            <rect width="12" height="5" rx="1" /><rect x="14" width="13" height="5" rx="1" />
            <rect y="7" width="17" height="5" rx="1" /><rect x="19" y="7" width="8" height="5" rx="1" />
            <rect y="14" width="27" height="5" rx="1" />
          </svg>
        </button>
      </div>
      <div className={clsx(TOOL, 'ml-4 flex h-[38px] rounded-lg')}>
        <button aria-label="Automation" className="flex w-[59px] items-center justify-center border-r border-[#424242]">
          <svg width="34" height="24" viewBox="0 0 34 24" fill="none" stroke="#fff" strokeWidth="2"><path d="M1 19h5M12 17L22 7M27 5h6" /><circle cx="9" cy="19" r="3" /><circle cx="24" cy="5" r="3" /></svg>
        </button>
        <button aria-label="Flex" className="flex w-[59px] items-center justify-center">
          <svg width="30" height="24" viewBox="0 0 30 24" fill="none" stroke="#fff" strokeWidth="2"><path d="M2 2v20q3 1 6-3L21 4q4-4 7-2v20q-3 1-7-3L9 4Q5 0 2 2z" /></svg>
        </button>
      </div>
      <button aria-label="Catch Playhead" className="ml-4 flex h-[38px] w-[62px] items-center justify-center rounded-lg bg-[#3a6eb8]">
        <svg width="28" height="28" viewBox="0 0 28 28" fill="none" stroke="#fff" strokeWidth="2"><path d="M14 8v18M4 11l5 5l-5 5M24 11l-5 5l5 5" /><path d="M10 2h8v5l-4 4l-4-4z" fill="#fff" /></svg>
      </button>

      <div className={clsx(TOOL, 'ml-auto flex h-[38px] rounded-lg')}>
        <ToolMenu label="Left-click tool">
          <svg width="20" height="28" viewBox="0 0 20 28" fill="#fff"><path d="M2 1v22l5-4l4 8l4-2l-4-8h7z" /></svg>
        </ToolMenu>
        <ToolMenu label="Command-click tool"><Scissors /></ToolMenu>
        <ToolMenu label="Right-click tool"><Scissors /></ToolMenu>
      </div>
      <div className="ml-[72px] flex items-center">
        <Picker id="snap" label="Snap:" value="Smart" className="w-[307px]" />
      </div>
      <div className="ml-[18px] flex items-center">
        <Picker id="drag" label="Drag:" value="No Overlap" className="w-[196px]" />
      </div>
      <button aria-label="Waveform zoom" className={clsx(TOOL, 'ml-[17px] flex h-[38px] w-[58px] items-center justify-center rounded-lg')}>
        <svg width="26" height="28" viewBox="0 0 26 28" stroke="#fff" strokeWidth="2"><path d="M2 12v4M6 8v12M10 1v26M14 7v14M18 4v20M22 9v10M25 12v4" /></svg>
      </button>
      <div className={clsx(TOOL, 'ml-4 flex h-[38px] rounded-lg')}>
        <button aria-label="Vertical auto zoom" className="flex w-[59px] items-center justify-center border-r border-[#424242]">
          <svg width="20" height="26" viewBox="0 0 20 26" fill="none" stroke="#fff" strokeWidth="2"><path d="M1 2h18M1 24h18M10 6v14M6 10l4-4l4 4M6 16l4 4l4-4" /></svg>
        </button>
        <button aria-label="Horizontal auto zoom" className="flex w-[59px] items-center justify-center">
          <svg width="26" height="20" viewBox="0 0 26 20" fill="none" stroke="#fff" strokeWidth="2"><path d="M2 1v18M24 1v18M6 10h14M10 6l-4 4l4 4M16 6l4 4l-4 4" /></svg>
        </button>
      </div>
      <div className="ml-4 flex h-[38px] shrink-0 items-center rounded-l-lg bg-[#3b3b3b] text-[#b0b0b0]">
        <svg width="14" height="22" viewBox="0 0 14 22" fill="none" stroke="currentColor" strokeWidth="2" className="ml-3"><path d="M7 2v18M2 7l5-5l5 5M2 15l5 5l5-5" /></svg>
        <input type="range" aria-label="Vertical zoom" defaultValue={26} className={clsx(zoom, 'ml-4 w-[86px]')} />
        <div className="ml-3 h-[38px] w-0.5 bg-[#2b2b2b]" />
        <svg width="22" height="14" viewBox="0 0 22 14" fill="none" stroke="currentColor" strokeWidth="2" className="ml-2"><path d="M2 7h18M7 2L2 7l5 5M15 2l5 5l-5 5" /></svg>
        <input type="range" aria-label="Horizontal zoom" defaultValue={2} className={clsx(zoom, 'mr-1.5 ml-2.5 w-[86px]')} />
      </div>
    </div>
  );
}

function TracksArea() {
  const square = clsx(TOOL, 'flex h-[38px] w-[60px] items-center justify-center rounded-lg');
  return (
    <main className="flex min-w-0 flex-1 flex-col border-t-[5px] border-l-[5px] border-[#8db3f0] bg-[#474747]">
      <TracksToolbar />
      <div className="flex min-h-0 flex-1">
        <div className="flex w-[915px] shrink-0 flex-col">
          <div className="flex h-[72px] shrink-0 items-center gap-5 border-t-2 border-[#404040] px-[15px] pb-1 text-white">
            <button aria-label="Add track" className={square}>
              <svg width="20" height="20" stroke="#fff" strokeWidth="2"><path d="M10 0v20M0 10h20" /></svg>
            </button>
            <button aria-label="Duplicate track" className={square}>
              <svg width="28" height="28" viewBox="0 0 28 28" fill="none" stroke="#fff" strokeWidth="2"><path d="M6 20H4a2 2 0 0 1-2-2V4a2 2 0 0 1 2-2h14a2 2 0 0 1 2 2v2" /><rect x="8" y="8" width="18" height="18" rx="2" /><path d="M17 12v10M12 17h10" /></svg>
            </button>
            <button aria-label="Global solo" className={clsx(square, 'text-2xl')}>S</button>
            <button aria-label="Track header options" className={clsx(square, 'mr-1 ml-auto')}>
              <svg width="30" height="24" viewBox="0 0 30 24" fill="none" stroke="#fff" strokeWidth="2"><rect x="2" y="2" width="26" height="20" rx="2" /><path d="M2 6h26M15 9v10M11 15l4 4l4-4" /></svg>
            </button>
          </div>
          <div className="min-h-0 flex-1 overflow-hidden bg-[#575757]">
            <div className="-mt-14 grid h-[1728px] auto-rows-fr">
              {TRACKS.map(t => <TrackHeader key={t.n} track={t} />)}
            </div>
          </div>
        </div>
        <div className="relative mr-1 flex min-w-0 flex-1 flex-col border-l-2 border-[#1e1e1e]">
          <Ruler />
          <div className="relative min-h-0 flex-1 overflow-hidden">
            <div className="-mt-14 grid h-[1728px] auto-rows-fr">
              {TRACKS.map(t => <Lane key={t.n} track={t} />)}
            </div>
            <div className="pointer-events-none absolute inset-y-0 left-0 w-5 bg-linear-to-r from-black/35 to-transparent" />
          </div>
          <div className="pointer-events-none absolute top-9 bottom-0 left-[731px] flex w-[33px] flex-col items-center">
            <svg width="33" height="34" viewBox="0 0 33 34" className="shrink-0"><path d="M5 0h23q5 0 5 5v10q0 5-3 8L16.500 34L3 23q-3-3-3-8V5q0-5 5-5z" fill="#a8a8a8" /><path d="M16.500 6v28" stroke="#fff" strokeWidth="3" /></svg>
            <div className="w-[3px] flex-1 bg-[#f0f0f0]" />
          </div>
        </div>
      </div>
      <div className="h-2 shrink-0 border-t-2 border-[#2c2c2c] bg-[#3a3a3a]" />
    </main>
  );
}

export default function App() {
  return (
    <div className="flex h-screen flex-col overflow-hidden bg-[#474747] font-['Inter','Noto_Sans_CJK_KR',sans-serif]">
      <ControlBar />
      <div className="flex min-h-0 flex-1 overflow-hidden">
        <Inspector />
        <TracksArea />
      </div>
    </div>
  );
}
